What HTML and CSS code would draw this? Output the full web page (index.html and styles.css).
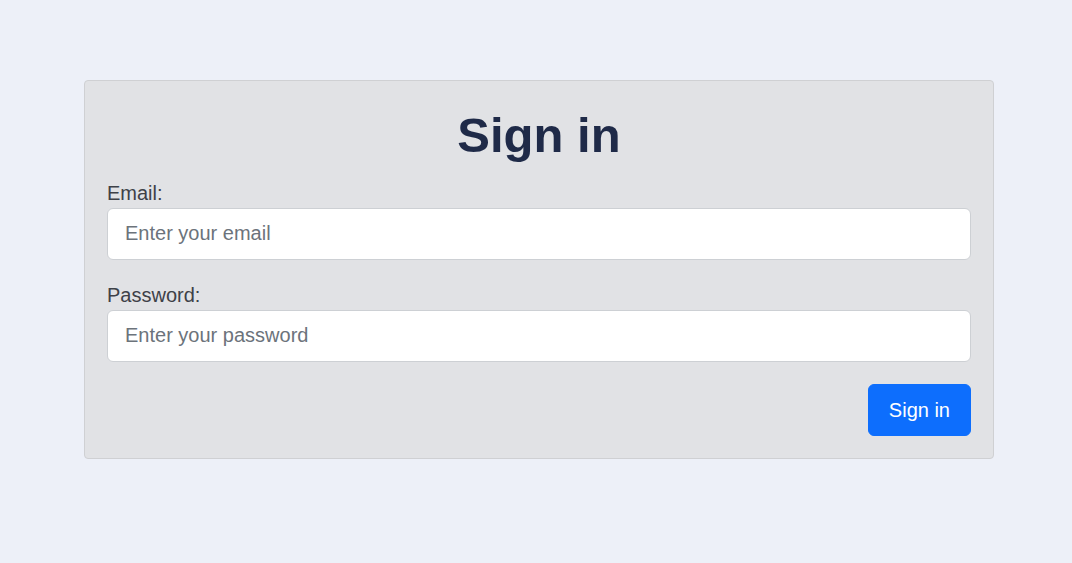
FILE: index.html
```html
<!DOCTYPE html>
<html lang="en">
<head>
<meta charset="utf-8">
<title>Sign in</title>
<link rel="stylesheet" href="styles.css">
</head>
<body>
<main class="page">
  <form class="card">
    <h1 class="title">Sign in</h1>
    <div class="field">
      <label class="label" for="email">Email:</label>
      <input class="input" id="email" type="email" placeholder="Enter your email">
    </div>
    <div class="field field-last">
      <label class="label" for="password">Password:</label>
      <input class="input" id="password" type="password" placeholder="Enter your password">
    </div>
    <div class="actions">
      <button class="btn" type="button">Sign in</button>
    </div>
  </form>
</main>
</body>
</html>
```
FILE: styles.css
```css
* { box-sizing: border-box; }
html, body {
  margin: 0;
  padding: 0;
  background: #edf0f8;
  font-family: "Liberation Sans", Arial, sans-serif;
}
.page {
  padding: 80px 0 0 84px;
  min-height: 563px;
}
.card {
  width: 910px;
  background: #e1e2e5;
  border: 1px solid #cfd0d3;
  border-radius: 4px;
  padding: 22px;
  display: flex;
  flex-direction: column;
}
.title {
  margin: 4px 0 13px;
  font-size: 49px;
  line-height: 57.6px;
  font-weight: 700;
  text-align: center;
  color: #1f2a48;
}
.field {
  display: flex;
  flex-direction: column;
  margin-bottom: 20px;
}
.field-last { margin-bottom: 22px; }
.label {
  font-size: 20px;
  line-height: 30px;
  color: #3e4148;
}
.input {
  height: 52px;
  padding: 10px 17px;
  font-family: inherit;
  font-size: 20px;
  line-height: 30px;
  color: #212529;
  background: #fff;
  border: 1px solid #cdd0d4;
  border-radius: 6px;
  outline: none;
}
.input::placeholder { color: #6c737b; }
.actions {
  display: flex;
  justify-content: flex-end;
}
.btn {
  font-family: inherit;
  font-size: 20px;
  line-height: 30px;
  padding: 10px 20px;
  color: #fff;
  background: #0d6efd;
  border: 1px solid #0d6efd;
  border-radius: 6px;
  cursor: pointer;
}
```
